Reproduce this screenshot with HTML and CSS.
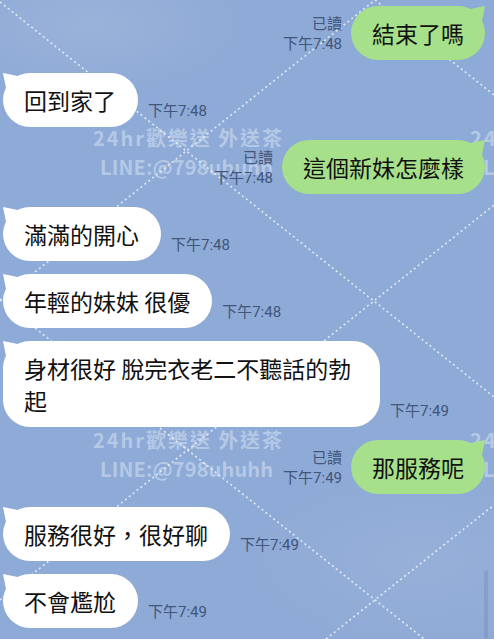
FILE: index.html
```html
<!DOCTYPE html>
<html lang="zh-Hant">
<head>
    <meta charset="UTF-8">
    <meta name="viewport" content="width=device-width, initial-scale=1.0">
    <title>聊天</title>
    <link rel="stylesheet" href="styles.css">
</head>
<body>
    <div class="screen">
        <!-- background pattern + watermark -->
        <svg class="backdrop" width="494" height="639" viewBox="0 0 494 639">
            <g class="dots">
                <line x1="0" y1="2" x2="494" y2="397" />
                <line x1="375" y1="0" x2="494" y2="95" />
                <line x1="0" y1="300" x2="424" y2="639" />
                <line x1="0" y1="300" x2="375" y2="0" />
                <line x1="0" y1="600" x2="494" y2="205" />
                <line x1="326" y1="639" x2="494" y2="505" />
            </g>
            <g class="mark">
                <text x="93" y="146" textLength="189" lengthAdjust="spacing">24hr歡樂送 外送茶</text>
                <text x="100" y="175" textLength="173" lengthAdjust="spacing">LINE:@798uhuhh</text>
                <text x="470" y="146" textLength="189" lengthAdjust="spacing">24hr歡樂送 外送茶</text>
                <text x="483" y="175" textLength="173" lengthAdjust="spacing">LINE:@798uhuhh</text>
                <text x="93" y="448" textLength="189" lengthAdjust="spacing">24hr歡樂送 外送茶</text>
                <text x="100" y="477" textLength="173" lengthAdjust="spacing">LINE:@798uhuhh</text>
                <text x="470" y="448" textLength="189" lengthAdjust="spacing">24hr歡樂送 外送茶</text>
                <text x="483" y="477" textLength="173" lengthAdjust="spacing">LINE:@798uhuhh</text>
            </g>
            <rect class="scroll" x="484" y="570" width="4" height="69" rx="2" />
        </svg>

        <div class="chat">
            <div class="row mine">
                <div class="meta"><span>已讀</span><span>下午7:48</span></div>
                <div class="bubble">結束了嗎</div>
            </div>
            <div class="row theirs">
                <div class="bubble">回到家了</div>
                <div class="meta"><span>下午7:48</span></div>
            </div>
            <div class="row mine">
                <div class="meta"><span>已讀</span><span>下午7:48</span></div>
                <div class="bubble">這個新妹怎麼樣</div>
            </div>
            <div class="row theirs">
                <div class="bubble">滿滿的開心</div>
                <div class="meta"><span>下午7:48</span></div>
            </div>
            <div class="row theirs">
                <div class="bubble">年輕的妹妹 很優</div>
                <div class="meta"><span>下午7:48</span></div>
            </div>
            <div class="row theirs">
                <div class="bubble">身材很好 脫完衣老二不聽話的勃起</div>
                <div class="meta"><span>下午7:49</span></div>
            </div>
            <div class="row mine">
                <div class="meta"><span>已讀</span><span>下午7:49</span></div>
                <div class="bubble">那服務呢</div>
            </div>
            <div class="row theirs">
                <div class="bubble">服務很好，很好聊</div>
                <div class="meta"><span>下午7:49</span></div>
            </div>
            <div class="row theirs">
                <div class="bubble">不會尷尬</div>
                <div class="meta"><span>下午7:49</span></div>
            </div>
        </div>
    </div>
</body>
</html>
```

FILE: styles.css
```css
body {
    margin: 0;
    background-color: #8eaad6;
}
.screen {
    position: relative;
    width: 494px;
    height: 639px;
    overflow: hidden;
    font-family: "Noto Sans CJK TC", sans-serif;
    background-color: #8eaad6;
    background-image:
        radial-gradient(ellipse 160px 70px at 90px 25px, rgba(255,255,255,0.1), transparent),
        radial-gradient(ellipse 180px 90px at 420px 560px, rgba(255,255,255,0.07), transparent);
}
.backdrop {
    position: absolute;
    top: 0;
    left: 0;
}
.dots line {
    stroke: rgba(255,255,255,0.75);
    stroke-width: 1.6;
    stroke-dasharray: 2 3;
}
.mark text {
    fill: rgba(240,245,255,0.42);
    font-family: "Noto Sans CJK TC", sans-serif;
    font-weight: 700;
    font-size: 20px;
}
.scroll {
    fill: rgba(110,130,165,0.3);
}
.chat {
    position: relative;
    display: flex;
    flex-direction: column;
    gap: 13px;
    padding: 6px 9px 0 3px;
}
.row {
    display: flex;
    align-items: flex-end;
    gap: 10px;
}
.row.mine {
    justify-content: flex-end;
    gap: 9px;
}
.bubble {
    position: relative;
    box-sizing: border-box;
    max-width: 377px;
    padding: 11px 22px 11px 21px;
    border-radius: 27px;
    font-size: 23px;
    line-height: 32px;
    color: #111;
}
.bubble::before {
    content: "";
    position: absolute;
    top: 0;
    width: 16px;
    height: 16px;
    background: inherit;
}
.theirs .bubble {
    background-color: #fff;
}
.theirs .bubble::before {
    left: 0;
    clip-path: polygon(0 0, 100% 20%, 20% 100%);
}
.mine .bubble {
    background-color: #a7e08b;
    padding: 11px 21px;
}
.mine .bubble::before {
    right: 0;
    clip-path: polygon(100% 0, 0 20%, 80% 100%);
}
.meta {
    display: flex;
    flex-direction: column;
    align-items: flex-end;
    margin-bottom: 6px;
    font-family: Roboto, "Noto Sans CJK TC", sans-serif;
    font-size: 15px;
    line-height: 20px;
    color: #42557a;
}
```
